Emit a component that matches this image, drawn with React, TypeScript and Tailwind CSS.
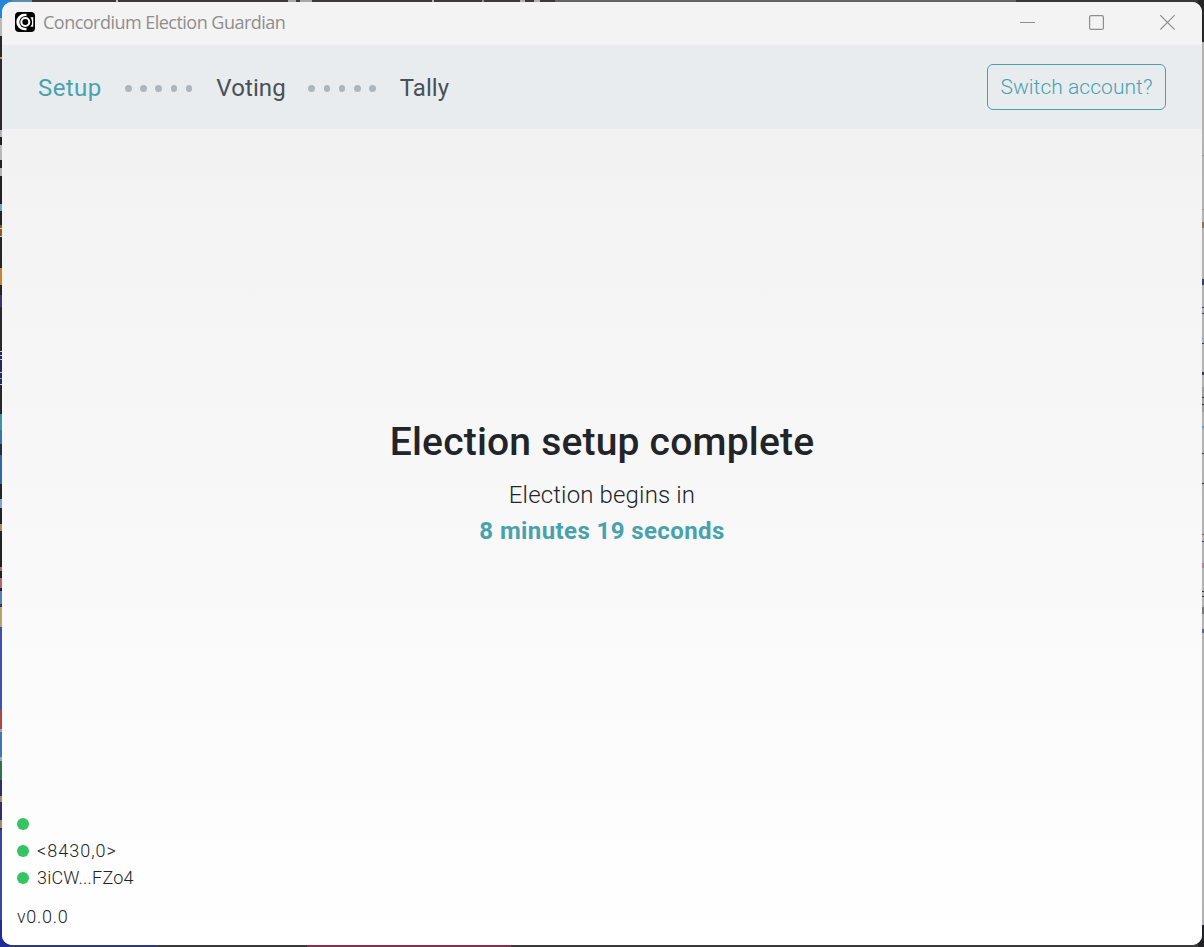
import React from "react";

type Segment = [start: number, size: number, color: string];

const leftEdge: Segment[] = [
  [0, 18, "#2486d6"], [18, 18, "#b9b9bb"], [36, 94, "#2a2828"], [57, 2, "#c98b4a"],
  [130, 7, "#b5b5b8"], [137, 8, "#232223"], [145, 15, "#b8b8ba"], [160, 8, "#232223"],
  [168, 8, "#b3b3b5"], [176, 28, "#232223"], [204, 7, "#6aa6d0"], [211, 14, "#232223"],
  [225, 11, "#8a5c20"], [228, 1, "#d0d0d0"], [236, 1, "#d0d0d0"], [237, 31, "#252425"],
  [268, 17, "#c8842e"], [285, 10, "#252425"], [295, 12, "#3b3570"], [307, 43, "#29282b"],
  [351, 1, "#c8c8c8"], [352, 48, "#23285a"], [355, 1, "#c8c8c8"], [359, 1, "#c8c8c8"],
  [372, 1, "#c8c8c8"], [378, 1, "#6aa0d0"], [384, 1, "#c8c8c8"], [386, 28, "#272728"],
  [414, 16, "#3f93a0"], [430, 14, "#3278b0"], [444, 11, "#23303a"], [455, 29, "#2f6aa8"],
  [484, 15, "#252425"], [499, 9, "#7fa0d0"], [508, 59, "#232223"], [524, 7, "#a98a68"],
  [567, 4, "#b5636c"], [571, 7, "#232223"], [578, 10, "#b5636c"], [588, 3, "#232223"],
  [591, 13, "#5580b8"], [604, 3, "#3a3a50"], [607, 20, "#b5a566"], [627, 83, "#4250b0"],
  [710, 19, "#b04545"], [729, 3, "#a5a5b0"], [732, 25, "#3c78b8"], [757, 4, "#a5a5b0"],
  [761, 19, "#2f7050"], [780, 50, "#2d3068"], [796, 6, "#a98a68"], [820, 8, "#a98a68"],
  [830, 90, "#3a44a2"], [920, 27, "#222c96"],
];

const rightEdge: Segment[] = [
  [0, 42, "#252525"], [42, 883, "#b2b2b2"], [155, 1, "#949494"], [209, 1, "#949494"],
  [222, 6, "#8b7264"], [279, 6, "#3a4060"], [307, 1, "#333a5a"], [313, 1, "#333a5a"],
  [338, 1, "#5aa0c8"], [343, 1, "#333a5a"], [372, 3, "#333a5a"], [387, 25, "#9e9e9e"],
  [397, 1, "#333333"], [404, 1, "#333333"], [426, 2, "#5aa0c8"], [453, 1, "#333333"],
  [483, 1, "#333333"], [534, 1, "#8b5a44"], [541, 1, "#333a5a"], [563, 5, "#a58794"],
  [591, 1, "#333333"], [596, 1, "#333333"], [607, 7, "#777777"], [629, 4, "#60608a"],
  [925, 22, "#202124"],
];

const topEdge: Segment[] = [
  [0, 12, "#2486d6"], [12, 20, "#5b8fae"], [32, 523, "#3c3839"], [116, 2, "#c0c0c0"],
  [288, 8, "#a8a8a8"], [300, 12, "#a8a8a8"], [432, 2, "#b0b0b0"], [482, 2, "#908e8e"],
  [520, 5, "#b0b0b0"], [534, 6, "#b0b0b0"], [555, 461, "#656565"], [1016, 188, "#373737"],
];

const bottomEdge: Segment[] = [
  [0, 10, "#222c96"], [10, 148, "#343a70"], [158, 149, "#3a393a"], [307, 204, "#86304f"], [511, 693, "#3b3b3b"],
];

function Desktop() {
  return (
    <div className="absolute inset-0 overflow-hidden bg-[#2a2a2a]" aria-hidden="true">
      {topEdge.map(([x, w, c], i) => (
        <div key={"t" + i} className="absolute top-0 h-2" style={{ left: x, width: w, background: c }} />
      ))}
      {bottomEdge.map(([x, w, c], i) => (
        <div key={"b" + i} className="absolute bottom-0 h-2" style={{ left: x, width: w, background: c }} />
      ))}
      {leftEdge.map(([y, h, c], i) => (
        <div key={"l" + i} className="absolute left-0 w-[6px]" style={{ top: y, height: h, background: c }} />
      ))}
      {rightEdge.map(([y, h, c], i) => (
        <div key={"r" + i} className="absolute right-0 w-[6px]" style={{ top: y, height: h, background: c }} />
      ))}
    </div>
  );
}

function Logo() {
  return (
    <svg width="20" height="20" viewBox="0 0 20 20" fill="none">
      <rect width="20" height="20" rx="4" fill="#000" />
      <path d="M11.5 1.8H9.5A8.2 8.2 0 0 0 9.5 18.2H11.5Z" fill="#fff" />
      <circle cx="10.3" cy="10" r="5.9" fill="#000" />
      <circle cx="10.3" cy="10" r="4" stroke="#fff" strokeWidth="2.1" />
      <path d="M15.4 5.2H18.3V14.8H15.4A7.4 7.4 0 0 0 15.4 5.2Z" fill="#fff" />
    </svg>
  );
}

function TitleBar() {
  return (
    <header className="flex h-[43px] shrink-0 items-start justify-between bg-[#f3f3f3] text-[#8e8e8e]">
      <div className="flex h-[40px] items-center pl-[13px]">
        <Logo />
        <span className="ml-2 whitespace-nowrap pt-px font-['Open_Sans','Noto_Sans',sans-serif] text-[18px] tracking-[-0.52px]">
          Concordium Election Guardian
        </span>
      </div>
      <div className="flex h-[40px] items-center pr-[26px]">
        <svg width="16" height="16" viewBox="0 0 16 16"><path d="M0 8.5h15" stroke="#8e8e8e" /></svg>
        <svg className="ml-[53px]" width="16" height="16" viewBox="0 0 16 16" fill="none">
          <rect x=".6" y="1.6" width="13.8" height="13.8" rx="1.5" stroke="#8e8e8e" strokeWidth="1.2" />
        </svg>
        <svg className="ml-[55px]" width="16" height="16" viewBox="0 0 16 16">
          <path d="M.3 1.2l14.4 14.4M14.7 1.2L.3 15.6" stroke="#8e8e8e" strokeWidth="1.2" />
        </svg>
      </div>
    </header>
  );
}

function StepDots() {
  return (
    <div className="flex gap-[8.6px] pt-[2px]">
      {[0, 1, 2, 3, 4].map((i) => (
        <span key={i} className="size-[6.6px] rounded-full bg-[#adb5bd]" />
      ))}
    </div>
  );
}

function Navigation() {
  return (
    <nav className="flex h-[84px] shrink-0 items-center justify-between bg-[#e9ecef] px-9 text-[24px] text-[#495057]">
      <div className="flex items-center whitespace-nowrap pt-px">
        <span className="w-[87px] tracking-[0.4px] text-[#48a2ae]">Setup</span>
        <StepDots />
        <span className="ml-6 w-[92px] tracking-[0.1px]">Voting</span>
        <StepDots />
        <span className="ml-6 tracking-[0.1px]">Tally</span>
      </div>
      <button className="flex h-[46px] w-[179px] items-center justify-center whitespace-nowrap rounded-[6px] border border-[#48a2ae] pt-px text-[21px] font-[350] tracking-[0.05px] text-[#48a2ae]">
        Switch account?
      </button>
    </nav>
  );
}

function StatusRow({ children }: { children?: React.ReactNode }) {
  return (
    <li className="flex h-[27px] items-center gap-2">
      <span className="size-3 rounded-full bg-[#34c464]" />
      {children}
    </li>
  );
}

export default function App() {
  return (
    <div className="relative h-[947px] w-[1204px] overflow-hidden p-[2px] font-['Roboto','Noto_Sans',sans-serif] text-[#212529]">
      <Desktop />
      <div className="relative flex h-[943px] w-[1200px] flex-col overflow-hidden rounded-[10px] bg-white">
        <TitleBar />
        <Navigation />
        <div className="flex min-h-0 flex-1 flex-col bg-linear-to-b from-[#f2f2f2] to-white">
          <main className="flex h-[674px] shrink-0 flex-col items-center whitespace-nowrap pt-[289px] text-center">
            <h1 className="h-[48px] text-[39px] font-medium leading-[48px] tracking-[0.2px]">Election setup complete</h1>
            <p className="mt-[11px] h-9 text-[24px] font-[350] leading-9 tracking-[0.15px]">Election begins in</p>
            <p className="h-9 text-[24px] font-bold leading-9 tracking-[0.4px] text-[#48a2ae]">8 minutes 19 seconds</p>
          </main>
          <footer className="whitespace-nowrap pl-[15px] text-[18px] font-[350]">
            <ul className="mt-[7px]">
              <StatusRow />
              <StatusRow><span className="tracking-[1px]">&lt;8430,0&gt;</span></StatusRow>
              <StatusRow><span className="tracking-[0.2px]">3iCW...FZo4</span></StatusRow>
            </ul>
            <p className="mt-3 leading-[27px] tracking-[0.7px]">v0.0.0</p>
          </footer>
        </div>
      </div>
    </div>
  );
}
